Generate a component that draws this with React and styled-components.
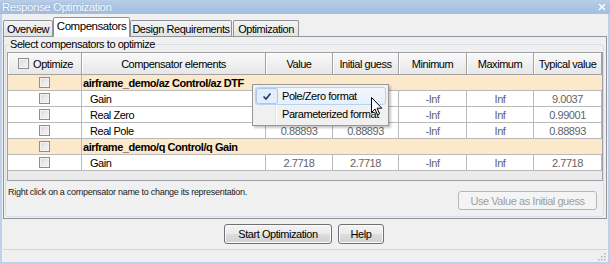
import React from 'react';
import styled, { createGlobalStyle } from 'styled-components';

const Global = createGlobalStyle`
  html, body { margin: 0; padding: 0; background: #ffffff; }
  * { box-sizing: border-box; }
`;

const FONT = `"Liberation Sans", Arial, sans-serif`;

const Window = styled.div`
  position: relative;
  width: 610px;
  height: 264px;
  display: flex;
  flex-direction: column;
  background: #f0f0f0;
  font-family: ${FONT};
  font-size: 11px;
  letter-spacing: -0.45px;
  color: #000;
  overflow: hidden;
`;

const TitleBar = styled.div`
  height: 14px;
  flex: none;
  display: flex;
  align-items: center;
  justify-content: space-between;
  padding: 0 4px 0 2px;
  background: linear-gradient(#b7cde8, #a3bee0);
  color: #f6f9fd;
  font-size: 11.5px;
  line-height: 14px;
  text-shadow: 0 0 2px rgba(60, 90, 130, 0.35);
`;

const Frame = styled.div`
  flex: 1;
  display: flex;
  flex-direction: column;
  border: 2px solid #bcd2eb;
  border-top: none;
  padding: 0 1px;
`;

const TabStrip = styled.div`
  height: 22px;
  flex: none;
  display: flex;
  align-items: flex-end;
  position: relative;
  z-index: 1;
`;

const Tab = styled.div`
  width: ${(p) => p.$w}px;
  height: ${(p) => (p.$active ? 20 : 16)}px;
  margin-bottom: ${(p) => (p.$active ? -1 : 0)}px;
  margin-left: ${(p) => p.$ml || 0}px;
  border: 1px solid #8f939a;
  border-bottom: none;
  border-radius: 2px 2px 0 0;
  background: ${(p) => (p.$active ? '#ffffff' : 'linear-gradient(#f4f4f4, #e3e3e3)')};
  display: flex;
  align-items: center;
  justify-content: center;
  padding-bottom: ${(p) => (p.$active ? 3 : 0)}px;
  font-size: ${(p) => (p.$active ? 11.5 : 11)}px;
  line-height: 14px;
  white-space: nowrap;
`;

const TabPanel = styled.div`
  height: 183px;
  flex: none;
  border: 1px solid #8f939a;
  background: #f0f0f0;
  display: flex;
  flex-direction: column;
`;

const GroupBox = styled.fieldset`
  flex: 1;
  min-width: 0;
  margin: 1px 2px 1px 1px;
  padding: 2px 0 0 1px;
  border: 1px solid #d5dfe5;
  border-radius: 3px;
`;

const Legend = styled.legend`
  margin-left: 2px;
  padding: 0 1px;
  font-size: 11px;
  line-height: 12px;
  color: #000;
`;

const Pane = styled.div`
  height: 129px;
  border: 1px solid #9c9fa4;
  background: #ebebeb;
  overflow: hidden;
`;

const Table = styled.table`
  table-layout: fixed;
  width: 594px;
  border-collapse: separate;
  border-spacing: 0;
  font-size: 11px;
`;

const HeadRow = styled.tr`
  height: 22px;
`;

const Th = styled.th`
  padding: 0;
  font-weight: normal;
  text-align: center;
  white-space: nowrap;
  background: linear-gradient(#f9f9f9, #e7e7e7);
  border-right: 1px solid #a2a2a2;
  border-bottom: 1px solid #a2a2a2;
  box-shadow: inset 1px 1px 0 #ffffff;
`;

const HeadInner = styled.div`
  display: flex;
  align-items: center;
  justify-content: center;
  gap: 4px;
  padding-left: 2px;
`;

const Row = styled.tr`
  height: 16px;
  background: ${(p) => (p.$group ? '#fce8ca' : '#ffffff')};
`;

const Td = styled.td`
  padding: 0 0 0 ${(p) => p.$pad || 0}px;
  border-right: ${(p) => (p.$noRight ? 'none' : '1px solid #b9b9b9')};
  border-bottom: 1px solid #b9b9b9;
  text-align: ${(p) => p.$align || 'left'};
  font-weight: ${(p) => (p.$bold ? 'bold' : 'normal')};
  color: ${(p) => p.$color || '#000'};
  white-space: nowrap;
  overflow: hidden;
  line-height: 14px;
`;

const CheckCell = styled.div`
  display: flex;
  justify-content: center;
  padding-right: 1px;
`;

const Check = styled.span`
  display: inline-block;
  width: 11px;
  height: 11px;
  border: 1px solid #8f8f8f;
  background: linear-gradient(135deg, #d9d9d9, #f7f7f7);
  box-shadow: inset 0 0 0 1px #f3f3f3;
`;

const Footer = styled.div`
  display: flex;
  justify-content: space-between;
  align-items: flex-start;
  padding: 0 6px 0 1px;
`;

const Hint = styled.div`
  margin-top: 6px;
  font-size: 9px;
  letter-spacing: -0.28px;
  line-height: 10px;
  color: #1a1a1a;
`;

const Button = styled.button`
  font-family: ${FONT};
  font-size: 11px;
  letter-spacing: -0.45px;
  width: ${(p) => p.$w}px;
  height: ${(p) => p.$h || 20}px;
  margin-top: ${(p) => p.$mt || 0}px;
  padding: 0;
  border-radius: 3px;
  border: 1px solid ${(p) => (p.disabled ? '#b4b8bb' : '#707070')};
  background: ${(p) =>
    p.disabled
      ? '#f4f4f4'
      : 'linear-gradient(#f3f3f3 0%, #ebebeb 48%, #dddddd 52%, #cfcfcf 100%)'};
  box-shadow: ${(p) => (p.disabled ? 'none' : 'inset 0 0 0 1px #fbfbfb')};
  color: ${(p) => (p.disabled ? '#9e9e9e' : '#000')};
`;

const ButtonRow = styled.div`
  height: 30px;
  flex: none;
  display: flex;
  justify-content: center;
  align-items: flex-start;
  gap: 6px;
  padding: 5px 2px 0 0;
`;

const StatusBar = styled.div`
  flex: 1;
  border-top: 1px solid #c9d7e7;
  display: flex;
  justify-content: flex-end;
  align-items: flex-end;
  padding: 0 1px 1px 0;
`;

const Menu = styled.div`
  position: absolute;
  left: 252px;
  top: 84px;
  width: 137px;
  height: 42px;
  padding: 2px;
  border: 1px solid #979797;
  box-shadow: 2px 2px 2px rgba(0, 0, 0, 0.22);
  background:
    linear-gradient(to right, transparent 22px, #e2e3e3 22px, #e2e3e3 23px, #ffffff 23px, #ffffff 24px, transparent 24px),
    #f0f0f0;
  z-index: 5;
`;

const MenuItem = styled.div`
  height: 18px;
  display: grid;
  grid-template-columns: 22px 1fr;
  align-items: center;
  border: 1px solid ${(p) => (p.$hot ? '#b5d3f5' : 'transparent')};
  border-radius: 3px;
  background: ${(p) => (p.$hot ? 'linear-gradient(#f3f7fc, #e7f0fb)' : 'transparent')};
  line-height: 14px;
  white-space: nowrap;
`;

const CheckMarkBox = styled.div`
  height: 16px;
  display: flex;
  align-items: center;
  justify-content: center;
  border: 1px solid ${(p) => (p.$on ? '#a9c9ee' : 'transparent')};
  border-radius: 2px;
  background: ${(p) => (p.$on ? '#e3eefa' : 'transparent')};
`;

const MenuText = styled.span`
  padding-left: 4px;
`;

const Cursor = styled.svg`
  position: absolute;
  left: 371px;
  top: 97px;
  z-index: 6;
`;

const rows = [
  { group: true, name: 'airframe_demo/az Control/az DTF' },
  { name: 'Gain', v: ['9.0037', '9.0037', '-Inf', 'Inf', '9.0037'] },
  { name: 'Real Zero', v: ['0.99001', '0.99001', '-Inf', 'Inf', '0.99001'] },
  { name: 'Real Pole', v: ['0.88893', '0.88893', '-Inf', 'Inf', '0.88893'] },
  { group: true, name: 'airframe_demo/q Control/q Gain' },
  { name: 'Gain', v: ['2.7718', '2.7718', '-Inf', 'Inf', '2.7718'] },
];

const widths = [74, 184, 67, 66, 68, 67, 68];
const headers = ['Compensator elements', 'Value', 'Initial guess', 'Minimum', 'Maximum', 'Typical value'];

export default function App() {
  return (
    <>
      <Global />
      <Window>
        <TitleBar>
          <span>Response Optimization</span>
          <svg width="8" height="8" viewBox="0 0 8 8">
            <path d="M1 1 L7 7 M7 1 L1 7" stroke="#ffffff" strokeWidth="1.4" />
          </svg>
        </TitleBar>
        <Frame>
          <TabStrip>
            <Tab $w={50}>Overview</Tab>
            <Tab $w={77} $active>Compensators</Tab>
            <Tab $w={102}>Design Requirements</Tab>
            <Tab $w={66} $ml={1}>Optimization</Tab>
          </TabStrip>
          <TabPanel>
            <GroupBox>
              <Legend>Select compensators to optimize</Legend>
              <Pane>
                <Table>
                  <colgroup>
                    {widths.map((w, i) => (
                      <col key={i} style={{ width: w }} />
                    ))}
                  </colgroup>
                  <thead>
                    <HeadRow>
                      <Th>
                        <HeadInner>
                          <Check />
                          <span>Optimize</span>
                        </HeadInner>
                      </Th>
                      {headers.map((h) => (
                        <Th key={h}>{h}</Th>
                      ))}
                    </HeadRow>
                  </thead>
                  <tbody>
                    {rows.map((r, i) =>
                      r.group ? (
                        <Row key={i} $group>
                          <Td>
                            <CheckCell>
                              <Check />
                            </CheckCell>
                          </Td>
                          <Td colSpan={6} $bold $noRight $pad={1}>
                            {r.name}
                          </Td>
                        </Row>
                      ) : (
                        <Row key={i}>
                          <Td>
                            <CheckCell>
                              <Check />
                            </CheckCell>
                          </Td>
                          <Td $pad={8}>{r.name}</Td>
                          {r.v.map((val, j) => (
                            <Td key={j} $align="center" $color="#646464">
                              {val}
                            </Td>
                          ))}
                        </Row>
                      )
                    )}
                  </tbody>
                </Table>
              </Pane>
              <Footer>
                <Hint>Right click on a compensator name to change its representation.</Hint>
                <Button disabled $w={139} $h={19} $mt={10}>
                  Use Value as Initial guess
                </Button>
              </Footer>
            </GroupBox>
          </TabPanel>
          <ButtonRow>
            <Button $w={108}>Start Optimization</Button>
            <Button $w={46}>Help</Button>
          </ButtonRow>
          <StatusBar>
            <svg width="8" height="8" viewBox="0 0 8 8">
              {[
                [6, 0],
                [6, 3],
                [3, 3],
                [6, 6],
                [3, 6],
                [0, 6],
              ].map(([x, y], k) => (
                <rect key={k} x={x} y={y} width="1.5" height="1.5" fill="#a9b3bf" />
              ))}
            </svg>
          </StatusBar>
        </Frame>
        <Menu>
          <MenuItem $hot>
            <CheckMarkBox $on>
              <svg width="10" height="9" viewBox="0 0 10 9">
                <path d="M1.5 4.5 L4 7 L8.5 1.5" fill="none" stroke="#203a68" strokeWidth="1.6" />
              </svg>
            </CheckMarkBox>
            <MenuText>Pole/Zero format</MenuText>
          </MenuItem>
          <MenuItem>
            <CheckMarkBox />
            <MenuText>Parameterized format</MenuText>
          </MenuItem>
        </Menu>
        <Cursor width="12" height="19" viewBox="0 0 12 19">
          <path
            d="M0.5 0.5 L0.5 15.5 L4 12 L6.5 17.8 L8.6 16.9 L6.1 11.2 L10.8 11.2 Z"
            fill="#ffffff"
            stroke="#000000"
            strokeWidth="1"
            strokeLinejoin="miter"
          />
        </Cursor>
      </Window>
    </>
  );
}
